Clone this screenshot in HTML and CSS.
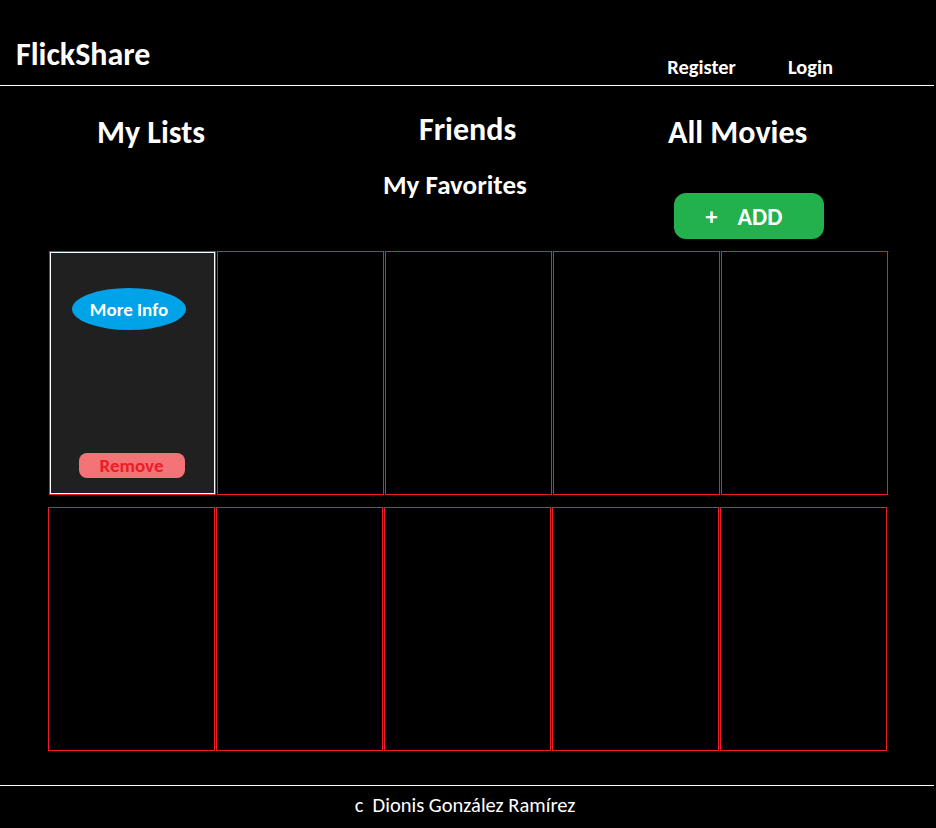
FILE: index.html
```html
<!DOCTYPE html>
<html lang="en">
<head>
<meta charset="utf-8">
<title>FlickShare</title>
<link rel="stylesheet" href="styles.css">
</head>
<body>
<header class="topbar">
  <h1 class="logo">FlickShare</h1>
  <nav class="auth">
    <a class="auth-link" href="#">Register</a>
    <a class="auth-link" href="#">Login</a>
  </nav>
</header>

<section class="tabs">
  <div class="tab-col tab-col-1">
    <h2 class="tab-title">My Lists</h2>
  </div>
  <div class="tab-col tab-col-2">
    <h2 class="tab-title tab-friends">Friends</h2>
    <h3 class="sub-title">My Favorites</h3>
  </div>
  <div class="tab-col tab-col-3">
    <h2 class="tab-title">All Movies</h2>
    <button class="add-btn"><span class="plus">+</span>ADD</button>
  </div>
</section>

<main class="movies">
  <div class="row row-1">
    <div class="card card-active">
      <div class="card-inner">
        <button class="more-info">More Info</button>
        <button class="remove">Remove</button>
      </div>
    </div>
    <div class="card"></div>
    <div class="card"></div>
    <div class="card"></div>
    <div class="card"></div>
  </div>
  <div class="row row-2">
    <div class="card"></div>
    <div class="card"></div>
    <div class="card"></div>
    <div class="card"></div>
    <div class="card"></div>
  </div>
</main>

<footer class="footer">
  <p class="copy">c&nbsp; Dionis González Ramírez</p>
</footer>
</body>
</html>
```

FILE: styles.css
```css
* { box-sizing: border-box; }

html, body {
  margin: 0;
  padding: 0;
  background: #000;
}

body {
  color: #fff;
  font-family: Carlito, Calibri, Lato, "Open Sans", sans-serif;
  width: 936px;
  height: 828px;
  overflow: hidden;
}

.topbar {
  display: flex;
  align-items: flex-start;
  width: 934px;
  height: 86px;
  border-bottom: 1px solid #fff;
  padding-left: 16px;
}

.logo {
  margin: 35px 0 0 0;
  font-size: 32px;
  line-height: 40px;
  font-weight: bold;
}

.auth {
  display: flex;
  gap: 52px;
  margin: 55px 101px 0 auto;
}

.auth-link {
  color: #fff;
  text-decoration: none;
  font-weight: bold;
  font-size: 20.5px;
  line-height: 24px;
}

.tabs {
  display: flex;
  height: 165px;
  padding-left: 97px;
}

.tab-col { display: flex; flex-direction: column; align-items: flex-start; }
.tab-col-1 { width: 286px; }
.tab-col-2 { width: 285px; }
.tab-col-3 { flex: 1; }

.tab-title {
  margin: 27px 0 0 0;
  font-size: 32px;
  line-height: 40px;
  font-weight: bold;
}

.tab-friends {
  margin-top: 24px;
  margin-left: 36px;
}

.sub-title {
  margin: 20px 0 0 0;
  font-size: 27px;
  line-height: 30px;
  font-weight: bold;
}

.add-btn {
  margin: 40px 0 0 6px;
  width: 150px;
  height: 46px;
  border: none;
  border-radius: 12px;
  background: #22b14c;
  color: #fff;
  font-family: inherit;
  font-weight: bold;
  font-size: 24px;
  padding: 0 10px 0 0;
  display: flex;
  align-items: center;
  justify-content: center;
}

.plus { margin-right: 20px; }

.movies {
  display: flex;
  flex-direction: column;
  gap: 12px;
}

.row {
  display: flex;
  gap: 1px;
}

.row-1 { margin-left: 49px; }
.row-2 { margin-left: 48px; }

.card {
  width: 167px;
  height: 244px;
  border: 1px solid #ed1c24;
  background: #000;
}

.card-active { background: #202020; }

.card-inner {
  height: 100%;
  border: 1px solid #fff;
  display: flex;
  flex-direction: column;
  align-items: center;
  justify-content: space-between;
  padding: 35px 0 15px 0;
}

.more-info {
  width: 114px;
  height: 42px;
  border: none;
  border-radius: 50%;
  background: #00a2e8;
  color: #fff;
  font-family: inherit;
  font-weight: bold;
  font-size: 19px;
  padding: 0;
  margin-right: 7px;
}

.remove {
  width: 106px;
  height: 25px;
  border: none;
  border-radius: 8px;
  background: #f37377;
  color: #ed1c24;
  font-family: inherit;
  font-weight: bold;
  font-size: 19px;
  line-height: 25px;
  padding: 0;
  margin-right: 2px;
}

.footer {
  margin-top: 34px;
  width: 934px;
  border-top: 1px solid #fff;
}

.copy {
  margin: 7px 0 0 0;
  text-align: center;
  font-size: 20.5px;
  line-height: 24px;
  padding-right: 4px;
}
```
